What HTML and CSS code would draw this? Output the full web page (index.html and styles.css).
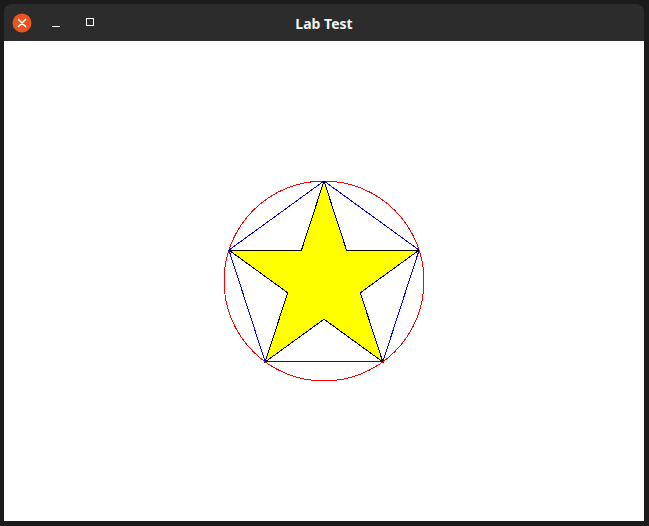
FILE: index.html
```html
<!DOCTYPE html>
<html>
<head>
<meta charset="utf-8">
<link rel="stylesheet" href="styles.css">
</head>
<body>
<div class="window">
  <div class="titlebar">
    <div class="controls">
      <span class="btn-close">
        <svg width="20" height="20" viewBox="0 0 20 20">
          <circle cx="10" cy="10" r="9.5" fill="#e95420"/>
          <path d="M6.5 6.5 L13.5 13.5 M13.5 6.5 L6.5 13.5" stroke="#fff" stroke-width="1.6" stroke-linecap="round"/>
        </svg>
      </span>
      <span class="btn-min"></span>
      <span class="btn-max"></span>
    </div>
    <div class="title">Lab Test</div>
  </div>
  <div class="content">
    <svg class="canvas" width="640" height="480" viewBox="0 0 640 480" shape-rendering="crispEdges">
      <circle cx="320" cy="240" r="100" fill="none" stroke="#ff0000" stroke-width="1"/>
      <polygon points="320,140 415.1,209.1 378.8,320.9 261.2,320.9 224.9,209.1" fill="none" stroke="#0000ff" stroke-width="1"/>
      <polygon points="320,140 342.5,209.1 415.1,209.1 356.3,251.8 378.8,320.9 320,278.2 261.2,320.9 283.7,251.8 224.9,209.1 297.5,209.1" fill="#ffff00" stroke="#000" stroke-width="1"/>
    </svg>
  </div>
</div>
</body>
</html>
```
FILE: styles.css
```css
html, body {
  margin: 0;
  padding: 0;
  background: #1b1b1b;
  width: 649px;
  height: 526px;
  overflow: hidden;
}
.window {
  margin: 4px 0 0 4px;
  width: 640px;
  display: flex;
  flex-direction: column;
}
.titlebar {
  height: 37px;
  background: #2c2c2c;
  border-radius: 8px 8px 0 0;
  position: relative;
  display: flex;
  align-items: center;
  justify-content: center;
}
.controls {
  position: absolute;
  left: 8px;
  top: 9px;
  display: flex;
  align-items: center;
}
.btn-close {
  width: 20px;
  height: 20px;
  display: block;
}
.btn-close svg { display: block; }
.btn-min {
  width: 8px;
  height: 1px;
  background: #fff;
  margin-left: 20px;
  margin-top: 6px;
}
.btn-max {
  width: 6px;
  height: 6px;
  border: 1px solid #fff;
  margin-left: 26px;
  margin-top: -3px;
}
.title {
  font-family: "Noto Sans", "DejaVu Sans", sans-serif;
  font-weight: bold;
  font-size: 14px;
  color: #f2f2f2;
  margin-top: 1px;
}
.content {
  width: 640px;
  height: 480px;
  background: #fff;
}
.canvas { display: block; }
```
